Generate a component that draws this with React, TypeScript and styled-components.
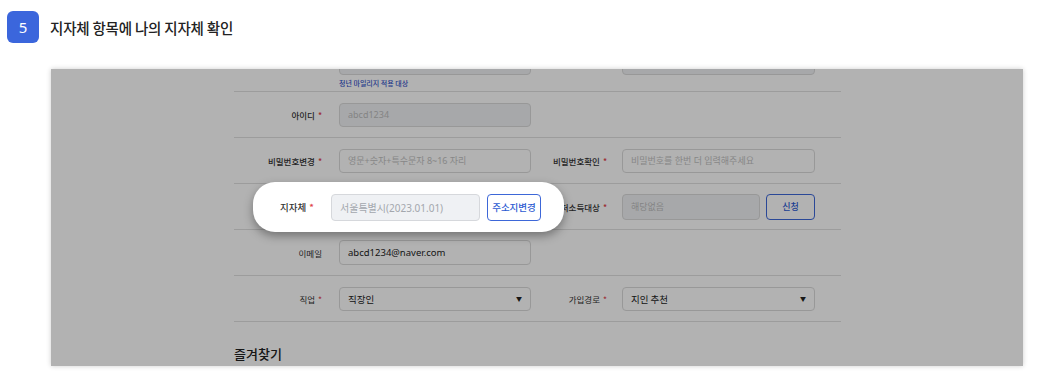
import React from "react";
import styled, { createGlobalStyle } from "styled-components";

const GlobalStyle = createGlobalStyle`
  html, body { margin: 0; padding: 0; background: #ffffff; }
  body { font-family: "Noto Sans", "Noto Sans CJK KR", sans-serif; color: #222; }
  * { box-sizing: border-box; }
`;

const Page = styled.div`
  width: 1052px;
  height: 392px;
  overflow: hidden;
`;

const Header = styled.div`
  display: flex;
  align-items: center;
  gap: 11px;
  padding: 11px 0 0 7px;
`;

const Badge = styled.div`
  width: 32px;
  height: 32px;
  border-radius: 6px;
  background: #3b66dc;
  color: #fff;
  font-size: 15px;
  display: flex;
  align-items: center;
  justify-content: center;
`;

const Title = styled.div`
  font-family: "Noto Sans CJK KR", sans-serif;
  font-size: 14.5px;
  font-weight: 500;
  color: #222;
  letter-spacing: -0.2px;
`;

const Panel = styled.div`
  position: relative;
  margin: 26px 0 0 51px;
  width: 972px;
  height: 297px;
  overflow: hidden;
  background: #ffffff;
  box-shadow: 0 0 5px rgba(0, 0, 0, 0.2);
`;

const Form = styled.div`
  width: 607px;
  margin: -30px 0 0 183px;
`;

const Row = styled.div<{ $top?: boolean }>`
  display: grid;
  grid-template-columns: 105px 192px 91px 193px;
  align-items: ${(p) => (p.$top ? "start" : "center")};
  height: ${(p) => (p.$top ? "53px" : "46px")};
  padding-top: ${(p) => (p.$top ? "12px" : "0")};
  border-bottom: 1px solid #e0e0e0;
`;

const Label = styled.div<{ $pad?: number; $bold?: boolean; $hidden?: boolean }>`
  font-family: "Noto Sans CJK KR", sans-serif;
  text-align: right;
  padding-right: ${(p) => p.$pad ?? 17}px;
  font-size: 8.5px;
  font-weight: ${(p) => (p.$bold ? 500 : 400)};
  color: #333;
  white-space: nowrap;
  visibility: ${(p) => (p.$hidden ? "hidden" : "visible")};
`;

const Star = styled.span`
  color: #e0424a;
  margin-left: 3px;
`;

const Field = styled.input<{ $disabled?: boolean; $dark?: boolean; $h?: number }>`
  display: block;
  width: 100%;
  height: ${(p) => p.$h ?? 24}px;
  border: 1px solid #dadada;
  border-radius: 4px;
  padding: 0 8px;
  font-family: "Noto Sans", "Noto Sans CJK KR", sans-serif;
  font-size: ${(p) => (p.$dark ? "9.5px" : "9px")};
  color: ${(p) => (p.$dark ? "#222" : "#bdbdbd")};
  background: ${(p) => (p.$disabled ? "#eff1f4" : "#ffffff")};
  outline: none;
  &::placeholder { color: #c2c2c2; }
`;

const Helper = styled.div`
  font-family: "Noto Sans CJK KR", sans-serif;
  font-size: 7px;
  font-weight: 500;
  color: #3152c8;
  margin-top: 3px;
`;

const Combo = styled.div<{ $gap?: number; $hidden?: boolean }>`
  display: flex;
  gap: ${(p) => p.$gap ?? 6}px;
  align-items: center;
  visibility: ${(p) => (p.$hidden ? "hidden" : "visible")};
`;

const OutlineButton = styled.button<{ $w: number; $h?: number; $fs?: number; $ml?: number }>`
  flex: none;
  width: ${(p) => p.$w}px;
  height: ${(p) => p.$h ?? 25}px;
  margin-left: ${(p) => p.$ml ?? 0}px;
  border: 1px solid #3d67d8;
  border-radius: 4px;
  background: #ffffff;
  color: #2d5bd2;
  font-family: "Noto Sans CJK KR", sans-serif;
  font-size: ${(p) => p.$fs ?? 9}px;
  font-weight: 500;
  padding: 0;
`;

const SelectBox = styled.div`
  height: 24px;
  border: 1px solid #dadada;
  border-radius: 4px;
  padding: 0 8px;
  display: flex;
  align-items: center;
  justify-content: space-between;
  font-family: "Noto Sans CJK KR", sans-serif;
  font-size: 9.5px;
  color: #222;
  background: #fff;
`;

const Caret = styled.span`
  font-size: 6px;
  color: #222;
`;

const SectionTitle = styled.div`
  font-family: "Noto Sans CJK KR", sans-serif;
  font-size: 13px;
  font-weight: 500;
  color: #222;
  margin-top: 22px;
`;

const Dim = styled.div`
  position: absolute;
  inset: 0;
  background: rgba(0, 0, 0, 0.3);
  z-index: 1;
`;

const Spotlight = styled.div`
  position: absolute;
  left: 202px;
  top: 113px;
  width: 311px;
  height: 50px;
  z-index: 2;
  background: #ffffff;
  border-radius: 22px;
  box-shadow: 0 4px 10px rgba(0, 0, 0, 0.35);
  display: flex;
  align-items: center;
  padding-left: 27px;
`;

const SpotLabel = styled.div`
  font-family: "Noto Sans CJK KR", sans-serif;
  font-size: 9.5px;
  font-weight: 500;
  color: #333;
  width: 51px;
  white-space: nowrap;
`;

const SpotField = styled(Field)`
  width: 149px;
  font-size: 10px;
  color: #a3a7ad;
  border-color: #d6d8dc;
`;

const Empty = styled.div``;

export default function App() {
  return (
    <Page>
      <GlobalStyle />
      <Header>
        <Badge>5</Badge>
        <Title>지자체 항목에 나의 지자체 확인</Title>
      </Header>
      <Panel>
        <Form>
          <Row $top>
            <Empty />
            <div>
              <Field $disabled readOnly value="" />
              <Helper>청년 마일리지 적용 대상</Helper>
            </div>
            <Empty />
            <Field $disabled readOnly value="" />
          </Row>
          <Row>
            <Label $bold>
              아이디<Star>*</Star>
            </Label>
            <Field $disabled readOnly value="abcd1234" />
            <Empty />
            <Empty />
          </Row>
          <Row>
            <Label $bold>
              비밀번호변경<Star>*</Star>
            </Label>
            <Field readOnly placeholder="영문+숫자+특수문자 8~16 자리" />
            <Label $bold $pad={15}>
              비밀번호확인<Star>*</Star>
            </Label>
            <Field readOnly placeholder="비밀번호를 한번 더 입력해주세요" />
          </Row>
          <Row>
            <Label $bold $hidden>
              지자체<Star>*</Star>
            </Label>
            <Combo $hidden>
              <Field $disabled readOnly value="서울특별시(2023.01.01)" />
              <OutlineButton $w={54}>주소지변경</OutlineButton>
            </Combo>
            <Label $bold $pad={15}>
              저소득대상<Star>*</Star>
            </Label>
            <Combo>
              <Field $disabled readOnly value="해당없음" $h={26} />
              <OutlineButton $w={49} $h={26}>
                신청
              </OutlineButton>
            </Combo>
          </Row>
          <Row>
            <Label>이메일</Label>
            <Field $dark readOnly value="abcd1234@naver.com" $h={25} />
            <Empty />
            <Empty />
          </Row>
          <Row>
            <Label>
              직업<Star>*</Star>
            </Label>
            <SelectBox>
              직장인<Caret>▼</Caret>
            </SelectBox>
            <Label $pad={15}>
              가입경로<Star>*</Star>
            </Label>
            <SelectBox>
              지인 추천<Caret>▼</Caret>
            </SelectBox>
          </Row>
          <SectionTitle>즐겨찾기</SectionTitle>
        </Form>
        <Dim />
        <Spotlight>
          <SpotLabel>
            지자체<Star>*</Star>
          </SpotLabel>
          <SpotField $disabled readOnly value="서울특별시(2023.01.01)" $h={27} />
          <OutlineButton $w={54} $h={27} $fs={9.5} $ml={7}>
            주소지변경
          </OutlineButton>
        </Spotlight>
      </Panel>
    </Page>
  );
}
